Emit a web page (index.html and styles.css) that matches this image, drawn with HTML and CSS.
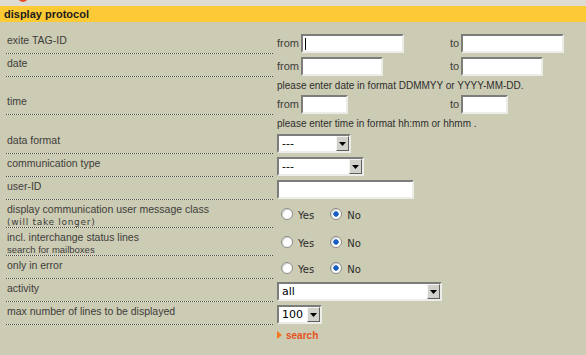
FILE: index.html
```html
<!DOCTYPE html>
<html>
<head>
<meta charset="utf-8">
<title>display protocol</title>
<link rel="stylesheet" href="styles.css">
</head>
<body>
<div class="topbar"><span class="dot"></span></div>
<div class="header">display protocol</div>
<form class="form">
  <div class="label">exite TAG-ID</div>
  <div class="field">
    <span class="pair first"><span class="pre">from</span><input class="in caret w103" type="text"></span>
    <span class="pair"><span class="pre to">to</span><input class="in w103" type="text"></span>
  </div>

  <div class="label">date</div>
  <div class="field">
    <span class="pair first"><span class="pre">from</span><input class="in w82" type="text"></span>
    <span class="pair"><span class="pre to">to</span><input class="in w82" type="text"></span>
  </div>
  <div class="blank"></div>
  <div class="hint">please enter date in format DDMMYY or YYYY-MM-DD.</div>

  <div class="label">time</div>
  <div class="field">
    <span class="pair first"><span class="pre">from</span><input class="in w47" type="text"></span>
    <span class="pair"><span class="pre to">to</span><input class="in w47" type="text"></span>
  </div>
  <div class="blank"></div>
  <div class="hint hint2">please enter time in format hh:mm or hhmm .</div>

  <div class="label">data format</div>
  <div class="field">
    <span class="sel w74"><select><option>---</option></select><span class="arrow"><svg width="7" height="4" viewBox="0 0 7 4"><polygon points="0,0 7,0 3.5,4" fill="#000"/></svg></span></span>
  </div>

  <div class="label">communication type</div>
  <div class="field">
    <span class="sel w87"><select><option>---</option></select><span class="arrow"><svg width="7" height="4" viewBox="0 0 7 4"><polygon points="0,0 7,0 3.5,4" fill="#000"/></svg></span></span>
  </div>

  <div class="label">user-ID</div>
  <div class="field">
    <input class="in w137" type="text">
  </div>

  <div class="label two">display communication user message class<br><span class="small wide">(will take longer)</span></div>
  <div class="field radios">
    <label class="opt"><input type="radio" name="r1">Yes</label>
    <label class="opt"><input type="radio" name="r1" checked>No</label>
  </div>

  <div class="label two">incl. interchange status lines<br><span class="small">search for mailboxes</span></div>
  <div class="field radios">
    <label class="opt"><input type="radio" name="r2">Yes</label>
    <label class="opt"><input type="radio" name="r2" checked>No</label>
  </div>

  <div class="label">only in error</div>
  <div class="field radios">
    <label class="opt"><input type="radio" name="r3">Yes</label>
    <label class="opt"><input type="radio" name="r3" checked>No</label>
  </div>

  <div class="label">activity</div>
  <div class="field">
    <span class="sel w165"><select><option>all</option></select><span class="arrow"><svg width="7" height="4" viewBox="0 0 7 4"><polygon points="0,0 7,0 3.5,4" fill="#000"/></svg></span></span>
  </div>

  <div class="label">max number of lines to be displayed</div>
  <div class="field">
    <span class="sel w45"><select><option>100</option></select><span class="arrow"><svg width="7" height="4" viewBox="0 0 7 4"><polygon points="0,0 7,0 3.5,4" fill="#000"/></svg></span></span>
  </div>

  <div class="blank"></div>
  <div class="search"><span class="tri"></span><a href="#" class="go">search</a></div>
</form>
</body>
</html>
```
FILE: styles.css
```css
html, body {
  margin: 0;
  padding: 0;
  background: #cccbb3;
  height: 100%;
}
body {
  font-family: "Liberation Sans", Arial, sans-serif;
  color: #3d3d3b;
}
.topbar {
  height: 6px;
  background: #dedcd2;
  overflow: hidden;
}
.dot {
  display: block;
  width: 10px;
  height: 10px;
  border-radius: 50%;
  background: #e84a1f;
  margin: -8px 0 0 18px;
}
.header {
  height: 16px;
  line-height: 17px;
  background: #fdc934;
  font-weight: bold;
  font-size: 11px;
  color: #1c1c1c;
  padding-left: 4px;
}
.form {
  display: grid;
  grid-template-columns: 267px 1fr;
  column-gap: 4px;
  row-gap: 3px;
  margin: 12px 0 0 6px;
}
.label {
  font-size: 10.5px;
  line-height: 13px;
  height: 20px;
  box-sizing: border-box;
  padding: 0 0 1px 1px;
  background: repeating-linear-gradient(90deg, #4a4a44 0 1px, #ecebe2 1px 2px) left bottom / 100% 1px no-repeat;
}
.label.two {
  height: 25px;
  line-height: 12px;
}
.small {
  font-size: 9.5px;
}
.small.wide {
  font-family: "DejaVu Sans", sans-serif;
  font-size: 9px;
  letter-spacing: 0.7px;
}
.field {
  display: flex;
  align-items: flex-start;
  font-size: 11px;
}
.pair {
  display: flex;
  align-items: center;
}
.pair.first {
  width: 173px;
}
.pre {
  width: 24px;
  line-height: 19px;
}
.pre.to {
  width: 11px;
}
.in {
  box-sizing: border-box;
  height: 19px;
  margin: 0;
  padding: 0 2px;
  border: 2px solid;
  border-color: #7c7c7a #ecece8 #ecece8 #7c7c7a;
  background: #fff;
  font: 11px "DejaVu Sans", sans-serif;
  outline: none;
}
.caret {
  background: linear-gradient(#000, #000) 2px 2px / 1px 12px no-repeat, #fff;
}
.w103 { width: 103px; }
.w82 { width: 82px; }
.w47 { width: 47px; }
.w137 { width: 137px; }
.w74 { width: 74px; }
.w87 { width: 87px; }
.w165 { width: 165px; }
.w45 { width: 45px; }
.blank {
  height: 0;
}
.hint {
  font-size: 10px;
  line-height: 12px;
  height: 12px;
  color: #2e2e2e;
}
.hint2 {
  height: 13px;
  line-height: 11px;
}
.sel {
  box-sizing: border-box;
  display: inline-flex;
  height: 19px;
  border: 2px solid;
  border-color: #7c7c7a #ecece8 #ecece8 #7c7c7a;
  background: #fff;
}
.sel select {
  appearance: none;
  -webkit-appearance: none;
  border: 0;
  margin: 0;
  padding: 0 0 0 3px;
  flex: 1;
  min-width: 0;
  height: 15px;
  background: transparent;
  font: 11px "DejaVu Sans", sans-serif;
  color: #000;
  outline: none;
}
.arrow {
  box-sizing: border-box;
  width: 13px;
  height: 15px;
  background: #d2d1cc;
  border: 1px solid;
  border-color: #f4f4f2 #5e5e5c #5e5e5c #f4f4f2;
  display: flex;
  align-items: center;
  justify-content: center;
}
.arrow svg {
  display: block;
}
.radios {
  align-items: center;
  align-self: center;
  margin-top: -2px;
}
.opt {
  display: inline-flex;
  align-items: center;
  font: 10px "DejaVu Sans", sans-serif;
  color: #2a2a2a;
  padding-top: 2px;
}
.opt input {
  appearance: none;
  -webkit-appearance: none;
  width: 12px;
  height: 12px;
  margin: -3px 5px 0 4px;
  border-radius: 50%;
  border: 1px solid #8c8c88;
  background: #fff;
  box-shadow: inset 1px 1px 1px rgba(0,0,0,0.18);
  box-sizing: border-box;
}
.opt input:checked {
  background: radial-gradient(circle, #1a5ec2 0 2.4px, #fff 3px);
}
.opt + .opt {
  margin-left: 12px;
}
.search {
  display: flex;
  align-items: center;
  height: 14px;
}
.tri {
  width: 0;
  height: 0;
  border-top: 4px solid transparent;
  border-bottom: 4px solid transparent;
  border-left: 5px solid #f27a1e;
  margin-right: 4px;
}
.go {
  color: #e5531d;
  font-weight: bold;
  font-size: 10px;
  text-decoration: none;
}
```
